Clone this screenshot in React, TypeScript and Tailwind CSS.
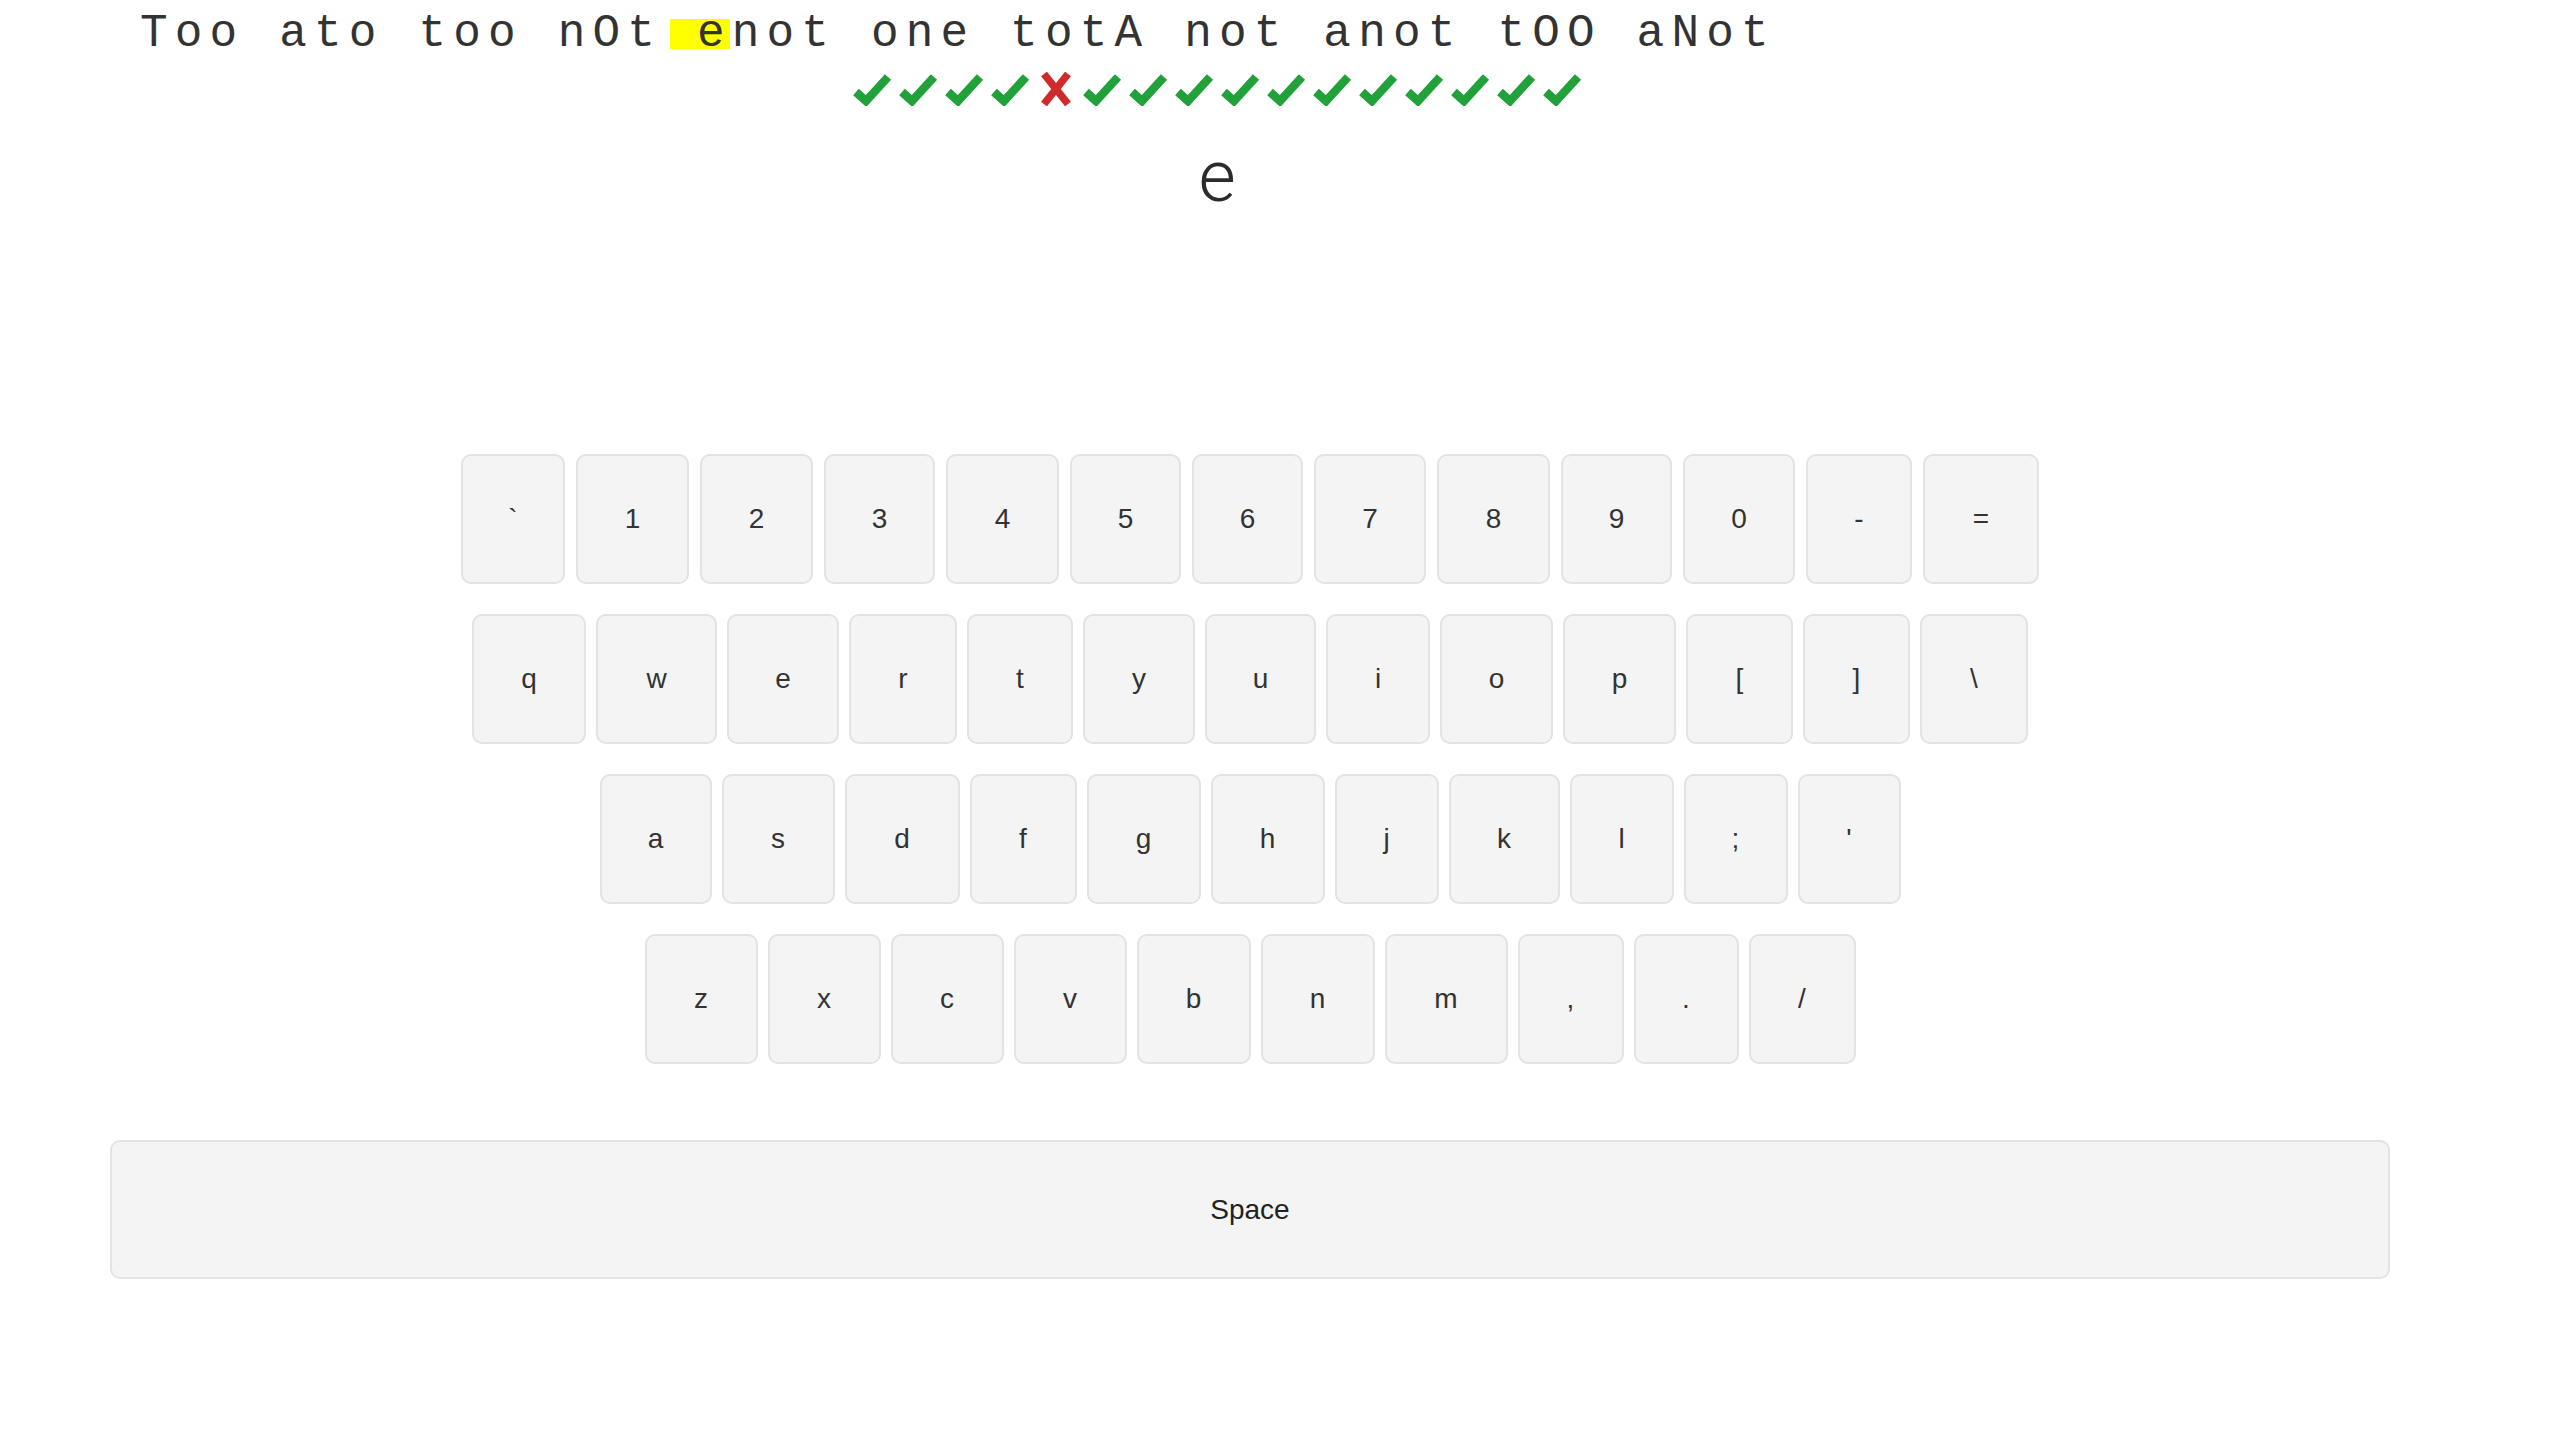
import * as React from "react";

type KeyDef = { label: string; w: string };

// widths measured per key, rows centred on the keyboard axis
const rows: { gap: string; keys: KeyDef[] }[] = [
  {
    gap: "gap-[11px]",
    keys: [
      { label: "`", w: "w-[104px]" },
      { label: "1", w: "w-[113px]" },
      { label: "2", w: "w-[113px]" },
      { label: "3", w: "w-[111px]" },
      { label: "4", w: "w-[113px]" },
      { label: "5", w: "w-[111px]" },
      { label: "6", w: "w-[111px]" },
      { label: "7", w: "w-[112px]" },
      { label: "8", w: "w-[113px]" },
      { label: "9", w: "w-[111px]" },
      { label: "0", w: "w-[112px]" },
      { label: "-", w: "w-[106px]" },
      { label: "=", w: "w-[116px]" },
    ],
  },
  {
    gap: "gap-[10px]",
    keys: [
      { label: "q", w: "w-[114px]" },
      { label: "w", w: "w-[121px]" },
      { label: "e", w: "w-[112px]" },
      { label: "r", w: "w-[108px]" },
      { label: "t", w: "w-[106px]" },
      { label: "y", w: "w-[112px]" },
      { label: "u", w: "w-[111px]" },
      { label: "i", w: "w-[104px]" },
      { label: "o", w: "w-[113px]" },
      { label: "p", w: "w-[113px]" },
      { label: "[", w: "w-[107px]" },
      { label: "]", w: "w-[107px]" },
      { label: "\\", w: "w-[108px]" },
    ],
  },
  {
    gap: "gap-[10px]",
    keys: [
      { label: "a", w: "w-[112px]" },
      { label: "s", w: "w-[113px]" },
      { label: "d", w: "w-[115px]" },
      { label: "f", w: "w-[107px]" },
      { label: "g", w: "w-[114px]" },
      { label: "h", w: "w-[114px]" },
      { label: "j", w: "w-[104px]" },
      { label: "k", w: "w-[111px]" },
      { label: "l", w: "w-[104px]" },
      { label: ";", w: "w-[104px]" },
      { label: "'", w: "w-[103px]" },
    ],
  },
  {
    gap: "gap-[10px]",
    keys: [
      { label: "z", w: "w-[113px]" },
      { label: "x", w: "w-[113px]" },
      { label: "c", w: "w-[113px]" },
      { label: "v", w: "w-[113px]" },
      { label: "b", w: "w-[114px]" },
      { label: "n", w: "w-[114px]" },
      { label: "m", w: "w-[123px]" },
      { label: ",", w: "w-[106px]" },
      { label: ".", w: "w-[105px]" },
      { label: "/", w: "w-[107px]" },
    ],
  },
];

// one entry per typed word: true = correct
const results = [true, true, true, true, false, true, true, true, true, true, true, true, true, true, true, true];

const Check = () => (
  <svg width="40" height="34" viewBox="0 0 40 34" className="block">
    <polyline points="4,20 14,29 36,5" fill="none" stroke="#21a13a" strokeWidth="8.5" strokeLinejoin="miter" />
  </svg>
);

const Cross = () => (
  <svg width="40" height="34" viewBox="0 0 40 34" className="block">
    <g stroke="#d12a2a" strokeWidth="7.5" strokeLinecap="butt">
      <line x1="8" y1="2" x2="32" y2="32" />
      <line x1="32" y1="2" x2="8" y2="32" />
    </g>
  </svg>
);

const Key = ({ label, w }: KeyDef) => (
  <div
    className={`${w} h-[130px] shrink-0 flex items-center justify-center rounded-[10px] border-2 border-[#e3e3e3] bg-[#f4f4f4] text-[28px] text-[#333] font-['Liberation_Sans',Arial,sans-serif]`}
  >
    {label}
  </div>
);

export default function App() {
  return (
    <div className="w-[2560px] min-h-[1451px] bg-white">
      <div className="w-[2434px]">
        <div className="pl-[140px] leading-[68px] h-[68px] text-[46px] tracking-[7.2px] text-[#333] whitespace-pre font-['Liberation_Mono','Courier_New',monospace]">
          <span>Too ato too nOt</span>
          <span className="inline-block leading-[30px] bg-[linear-gradient(to_right,transparent_8px,#ffff00_8px,#ffff00_68px,transparent_68px)]"> e</span>
          <span>not one totA not anot tOO aNot</span>
        </div>
        <div className="mt-[4px] flex justify-center gap-[6px]">
          {results.map((ok, i) => (ok ? <Check key={i} /> : <Cross key={i} />))}
        </div>
        <div className="mt-[35px] h-[72px] leading-[72px] text-center text-[72px] font-light text-[#2b2b2b] font-['Roboto','Open_Sans',sans-serif]">
          e
        </div>
      </div>

      <div className="w-[2500px] mt-[241px] flex flex-col items-center gap-[30px]">
        {rows.map((row, r) => (
          <div key={r} className={`flex ${row.gap}`}>
            {row.keys.map((k) => (
              <Key key={k.label} {...k} />
            ))}
          </div>
        ))}
      </div>

      <div className="w-[2500px] mt-[76px] flex justify-center">
        <div className="w-[2280px] h-[139px] flex items-center justify-center rounded-[10px] border-2 border-[#e3e3e3] bg-[#f4f4f4] text-[28px] text-[#222] font-['Liberation_Sans',Arial,sans-serif]">
          Space
        </div>
      </div>
    </div>
  );
}
